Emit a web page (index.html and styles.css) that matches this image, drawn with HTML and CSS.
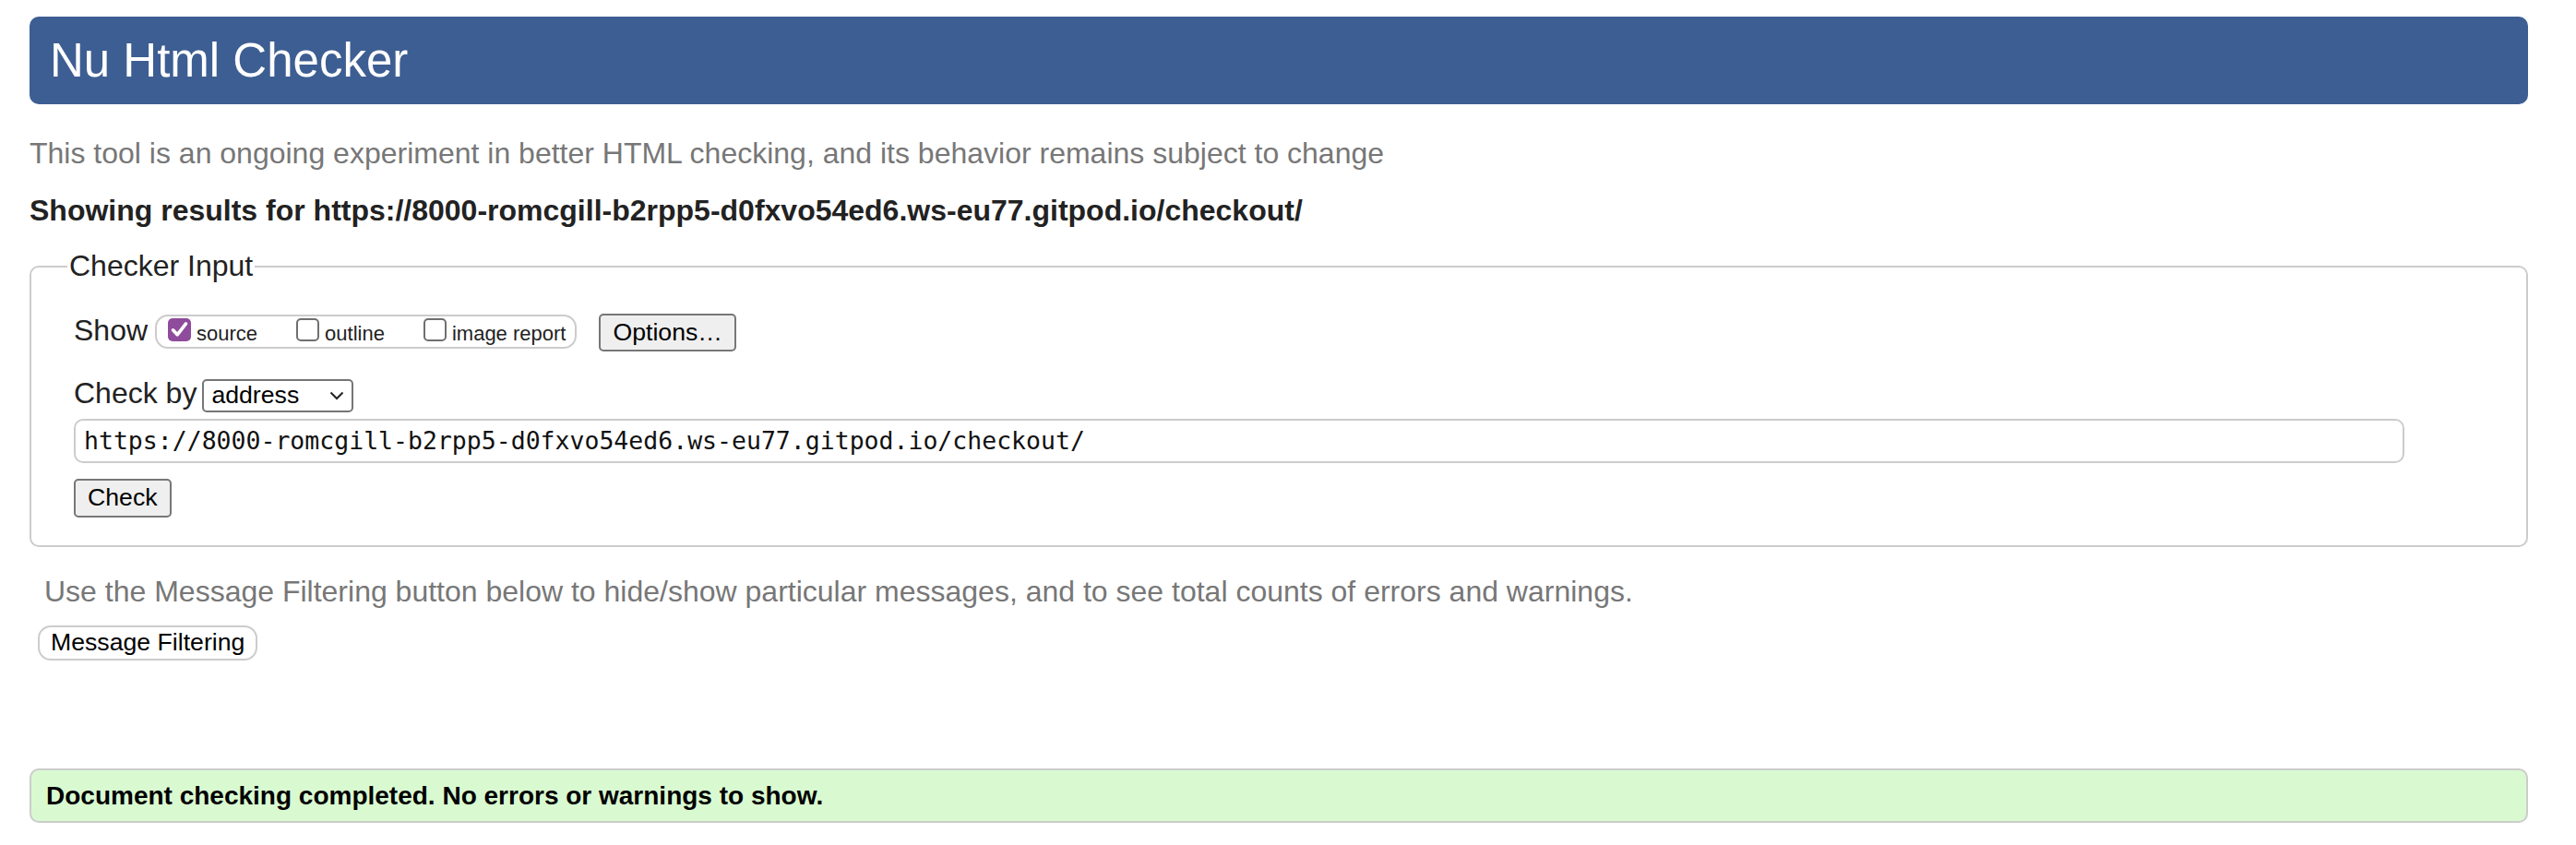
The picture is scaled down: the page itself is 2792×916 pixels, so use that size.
FILE: index.html
```html
<!DOCTYPE html>
<html lang="en">
<head>
<meta charset="utf-8">
<title>Nu Html Checker</title>
<link rel="stylesheet" href="styles.css">
</head>
<body>
<header class="masthead"><h1 class="masthead-title">Nu Html Checker</h1></header>
<p class="intro">This tool is an ongoing experiment in better HTML checking, and its behavior remains subject to change</p>
<p class="results-for">Showing results for https://8000-romcgill-b2rpp5-d0fxvo54ed6.ws-eu77.gitpod.io/checkout/</p>
<fieldset class="checker">
  <legend class="checker-legend">Checker Input</legend>
  <div class="row">
    <span class="row-label">Show</span>
    <div class="show-group">
      <span class="opt"><span class="cb cb-checked"><svg width="25" height="25" viewBox="0 0 25 25"><path d="M5.5 12.8 L10.2 17.8 L19.5 5.8" fill="none" stroke="#fff" stroke-width="3.6" stroke-linecap="round" stroke-linejoin="round"/></svg></span>source</span>
      <span class="opt"><span class="cb"></span>outline</span>
      <span class="opt"><span class="cb"></span>image report</span>
    </div>
    <span class="btn btn-options">Options…</span>
  </div>
  <div class="row row-by">
    <span class="row-label">Check by</span>
    <span class="select">address<svg class="chev" width="16" height="10" viewBox="0 0 16 10"><path d="M1.5 1.5 L8 8 L14.5 1.5" fill="none" stroke="#222" stroke-width="2"/></svg></span>
  </div>
  <div class="url-input">https://8000-romcgill-b2rpp5-d0fxvo54ed6.ws-eu77.gitpod.io/checkout/</div>
  <span class="btn btn-check">Check</span>
</fieldset>
<p class="filter-note">Use the Message Filtering button below to hide/show particular messages, and to see total counts of errors and warnings.</p>
<span class="filter-btn">Message Filtering</span>
<div class="success">Document checking completed. No errors or warnings to show.</div>
</body>
</html>
```
FILE: styles.css
```css
html, body {
  margin: 0;
  background: #fff;
}
body {
  padding: 18px 52px 0 32px;
  font-family: "Liberation Sans", Arial, sans-serif;
  font-size: 32px;
  line-height: 37px;
  color: #222;
}
.masthead {
  height: 95px;
  background: #3d5e92;
  border-radius: 10px;
  display: flex;
  align-items: center;
  padding-left: 22px;
}
.masthead-title {
  margin: 0;
  font-size: 51px;
  font-weight: normal;
  line-height: 59px;
  color: #fff;
}
.intro {
  margin: 35px 0 0 0;
  color: #777;
}
.results-for {
  margin: 25px 0 0 0;
  font-weight: bold;
  color: #222;
}
.checker {
  margin: 23px 0 0 0;
  padding: 33px 46px 30px 46px;
  border: 2px solid #ccc;
  border-radius: 10px;
  min-width: 0;
}
.checker-legend {
  padding: 0 2px;
  margin-left: -7px;
  line-height: 37px;
  color: #222;
}
.row {
  display: flex;
  align-items: baseline;
}
.row-label {
  margin-right: 8px;
}
.row-by {
  margin-top: 27px;
}
.row-by .row-label {
  margin-right: 6px;
}
.show-group {
  display: inline-flex;
  align-items: center;
  gap: 42px;
  height: 37px;
  box-sizing: border-box;
  border: 2px solid #ccc;
  border-radius: 14px;
  padding: 0 10px 0 12px;
  font-size: 22px;
  line-height: 26px;
  color: #222;
}
.opt {
  display: inline-flex;
  align-items: baseline;
  gap: 6px;
}
.cb {
  display: inline-block;
  width: 25px;
  height: 25px;
  box-sizing: border-box;
  border: 2px solid #6f6f6f;
  border-radius: 5px;
  background: #fff;
  position: relative;
  top: 1px;
}
.cb-checked {
  border: none;
  background: #8f4b9c;
}
.cb-checked svg {
  display: block;
}
.btn {
  display: inline-flex;
  align-items: center;
  height: 42px;
  box-sizing: border-box;
  padding: 0 13px;
  border: 2px solid #777;
  border-radius: 5px;
  background: #efefef;
  font-size: 26.67px;
  line-height: 31px;
  color: #000;
}
.btn-options {
  margin-left: 24px;
  height: 41px;
}
.select {
  display: inline-flex;
  align-items: center;
  justify-content: space-between;
  width: 164px;
  height: 36px;
  box-sizing: border-box;
  padding: 0 8px 0 8px;
  border: 2px solid #767676;
  border-radius: 5px;
  background: #fff;
  font-size: 26.67px;
  line-height: 31px;
  color: #000;
}
.chev {
  display: block;
}
.url-input {
  margin-top: 7px;
  width: 2526px;
  height: 48px;
  box-sizing: border-box;
  display: flex;
  align-items: center;
  padding: 0 9px;
  border: 2px solid #ccc;
  border-radius: 10px;
  font-family: "DejaVu Sans Mono", "Liberation Mono", monospace;
  font-size: 26.5px;
  line-height: 32px;
  color: #111;
}
.btn-check {
  margin-top: 17px;
}
.filter-note {
  margin: 30px 0 0 16px;
  color: #777;
}
.filter-btn {
  display: inline-flex;
  align-items: center;
  margin: 18px 0 0 9px;
  height: 38px;
  box-sizing: border-box;
  padding: 0 12px;
  border: 2px solid #ccc;
  border-radius: 14px;
  background: #fff;
  font-size: 26.67px;
  line-height: 31px;
  color: #000;
}
.success {
  margin-top: 117px;
  height: 59px;
  box-sizing: border-box;
  display: flex;
  align-items: center;
  padding-left: 16px;
  border: 2px solid #ccc;
  border-radius: 10px;
  background: #d9fad1;
  font-size: 28px;
  font-weight: bold;
  color: #000;
}
```
